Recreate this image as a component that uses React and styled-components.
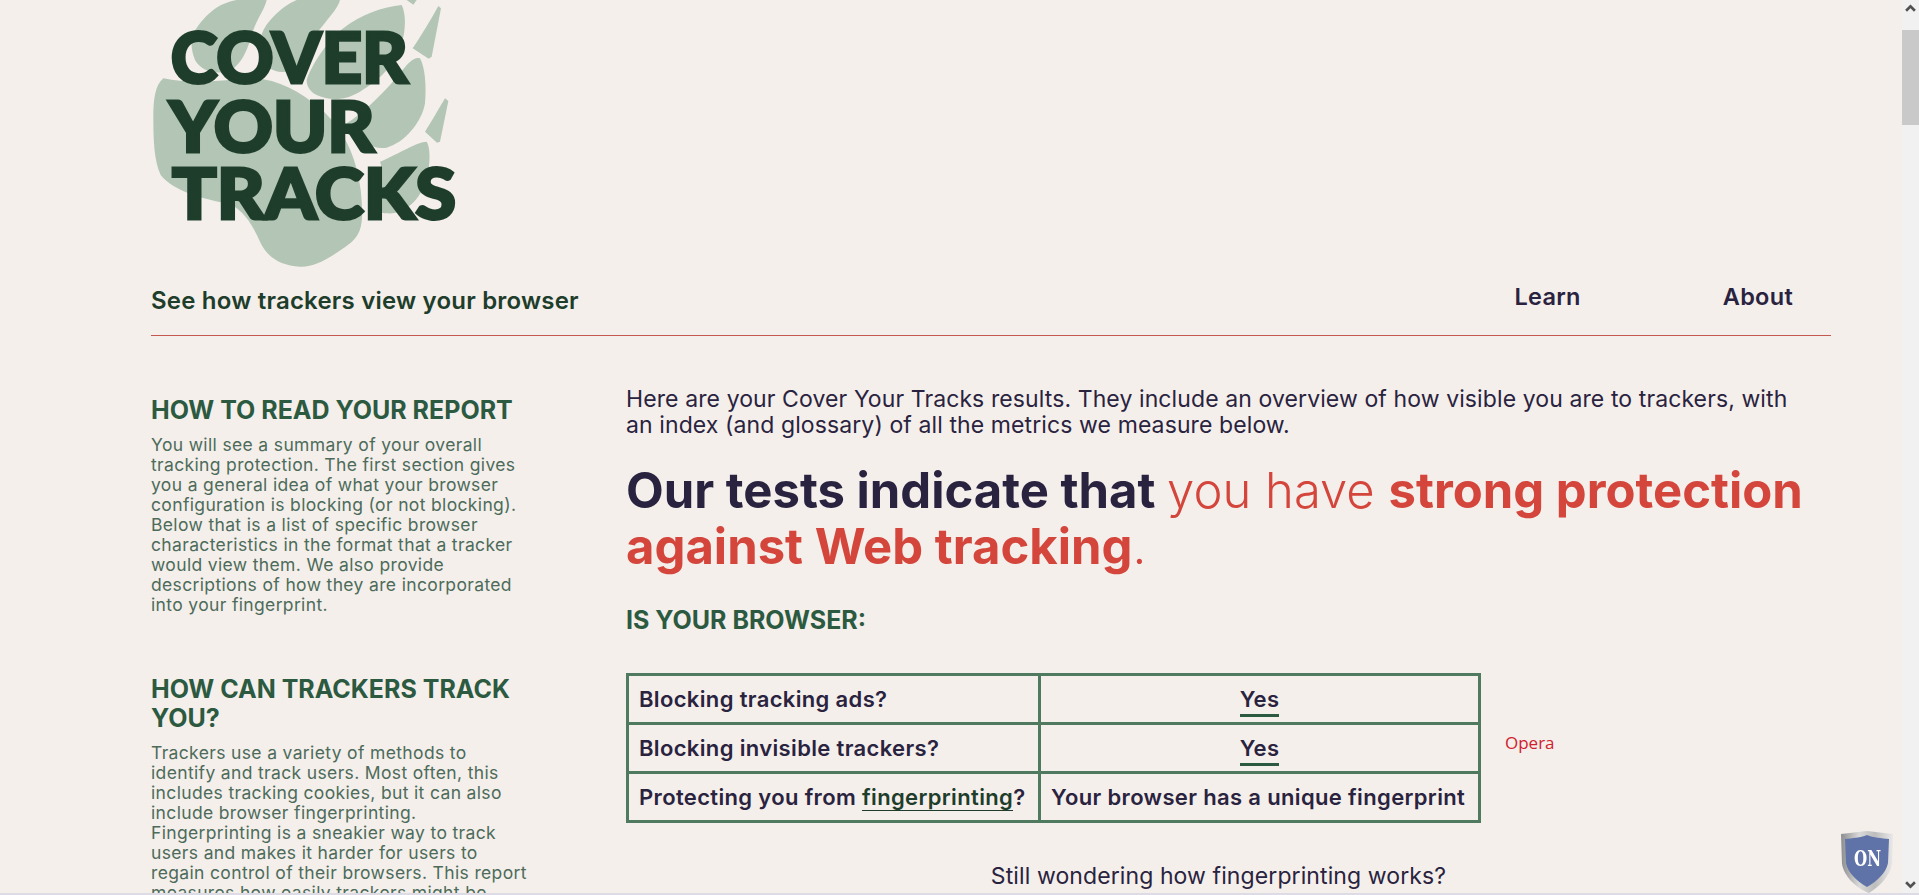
import React from "react";
import styled, { createGlobalStyle } from "styled-components";

const GlobalStyle = createGlobalStyle`
  html, body {
    margin: 0;
    padding: 0;
    height: 100%;
    overflow: hidden;
    background: #f4efeb;
  }
`;

const font = `Inter, "Noto Sans", "Liberation Sans", sans-serif`;

function Logo() {
  return (
    <LogoSvg viewBox="63 0 960 810">
      <g fill="#b3c5b5">
        <path d="M100 235C170 250 250 245 330 236C420 225 500 265 570 325C640 385 680 470 692 570C705 690 690 710 640 745C590 780 550 802 510 800C450 797 410 770 390 725C370 680 345 635 300 612C230 600 130 575 92 525C72 480 70 420 70 350C70 300 75 255 100 235Z" />
        <path d="M190 100C220 50 260 10 320 0L410 0C405 25 385 50 370 90C355 140 340 190 300 212C260 225 215 215 195 180C185 155 180 125 190 100Z" />
        <path d="M500 0L630 0C625 25 590 60 560 100C530 140 520 190 480 212C440 225 405 205 392 165C380 120 400 80 430 50C450 30 475 10 500 0Z" />
        <path d="M530 240C545 195 590 125 640 85C690 45 760 20 815 15C828 40 828 90 815 130C800 190 750 240 690 275C640 305 590 300 560 285C540 275 530 260 530 240Z" />
        <path d="M870 175C885 200 890 260 885 310C875 370 820 430 770 443C730 450 695 430 650 370C700 340 770 270 810 220C830 195 850 170 870 175Z" />
        <path d="M890 425C900 440 905 490 885 550C865 610 815 645 770 640C750 640 740 630 735 620C760 570 760 510 750 485C810 460 860 425 890 425Z" />
        <path d="M925 18L933 25L905 170L896 176L848 145C875 105 905 55 925 18Z" />
        <path d="M945 295L955 303L930 425L921 428L885 395C905 365 930 320 945 295Z" />
        <path d="M830 0L860 0L850 14Z" />
      </g>
      <LogoText x="122" y="250" textLength="712" lengthAdjust="spacingAndGlyphs">COVER</LogoText>
      <LogoText x="117" y="456" textLength="617" lengthAdjust="spacingAndGlyphs">YOUR</LogoText>
      <LogoText x="126" y="658" textLength="852" lengthAdjust="spacingAndGlyphs">TRACKS</LogoText>
    </LogoSvg>
  );
}

function Shield() {
  return (
    <ShieldBadge>
      <svg viewBox="0 0 54 64" width="54" height="64">
        <defs>
          <linearGradient id="steel" x1="0" x2="1" y1="0" y2="0">
            <stop offset="0" stopColor="#8d8d8f" />
            <stop offset="0.35" stopColor="#d9d9d9" />
            <stop offset="0.65" stopColor="#bdbdbd" />
            <stop offset="1" stopColor="#e8e8e8" />
          </linearGradient>
        </defs>
        <path d="M1 4C10 3 18 2 27 1C36 2 44 3 53 4L52 34C50 46 40 56 29 63C16 58 4 46 2 34Z" fill="url(#steel)" />
        <path d="M5 9C13 8 20 8 27 5C34 8 41 8 49 9L48 33C46 43 37 51 27 57C17 51 8 43 6 33Z" fill="#5f73a8" />
        <ShieldText x="14" y="36" textLength="27" lengthAdjust="spacingAndGlyphs">ON</ShieldText>
      </svg>
    </ShieldBadge>
  );
}

function ResultRow({ label, children, link, tail, center }) {
  return (
    <tr>
      <Cell $bold>
        {label}
        {link && <GlossaryLink>{link}</GlossaryLink>}
        {tail}
      </Cell>
      <Cell $center={center}>{children}</Cell>
    </tr>
  );
}

export default function App() {
  return (
    <Shell>
      <GlobalStyle />
      <Page>
        <Wrap>
          <Logo />
          <TopRow>
            <Tagline>See how trackers view your browser</Tagline>
            <Nav>
              <NavLink>Learn</NavLink>
              <NavLink>About</NavLink>
            </Nav>
          </TopRow>
          <Columns>
            <Sidebar>
              <SideTitle>HOW TO READ YOUR REPORT</SideTitle>
              <SideText>
                You will see a summary of your overall tracking protection. The first section gives you a general idea of what your browser configuration is blocking (or not blocking). Below that is a list of specific browser characteristics in the format that a tracker would view them. We also provide descriptions of how they are incorporated into your fingerprint.
              </SideText>
              <SideTitle>HOW CAN TRACKERS TRACK YOU?</SideTitle>
              <SideText>
                Trackers use a variety of methods to identify and track users. Most often, this includes tracking cookies, but it can also include browser fingerprinting. Fingerprinting is a sneakier way to track users and makes it harder for users to regain control of their browsers. This report measures how easily trackers might be able to fingerprint your browser.
              </SideText>
            </Sidebar>
            <Main>
              <Intro>
                Here are your Cover Your Tracks results. They include an overview of how visible you are to trackers, with an index (and glossary) of all the metrics we measure below.
              </Intro>
              <Verdict>
                Our tests indicate that <Thin>you have </Thin>
                <Strong>strong protection against Web tracking</Strong>
                <Thin>.</Thin>
              </Verdict>
              <SectionTitle>IS YOUR BROWSER:</SectionTitle>
              <TableRow>
                <Results>
                  <tbody>
                    <ResultRow label="Blocking tracking ads?" center>
                      <Answer>Yes</Answer>
                    </ResultRow>
                    <ResultRow label="Blocking invisible trackers?" center>
                      <Answer>Yes</Answer>
                    </ResultRow>
                    <ResultRow label="Protecting you from " link="fingerprinting" tail="?">
                      <Plain>Your browser has a unique fingerprint</Plain>
                    </ResultRow>
                  </tbody>
                </Results>
                <BrowserName>Opera</BrowserName>
              </TableRow>
              <Wondering>Still wondering how fingerprinting works?</Wondering>
            </Main>
          </Columns>
        </Wrap>
      </Page>
      <ScrollTrack>
        <ScrollArrow viewBox="0 0 10 8">
          <path d="M1 6L5 2L9 6" />
        </ScrollArrow>
        <ScrollThumb />
        <ScrollGap />
        <ScrollArrow viewBox="0 0 10 8">
          <path d="M1 2L5 6L9 2" />
        </ScrollArrow>
      </ScrollTrack>
      <Shield />
      <BottomStrip />
    </Shell>
  );
}

const Shell = styled.div`
  display: flex;
  height: 895px;
  overflow: hidden;
  font-family: ${font};
  background: #f4efeb;
`;
const Page = styled.div`
  flex: 1;
  min-width: 0;
  height: 895px;
  overflow: hidden;
`;
const Wrap = styled.div`
  width: 1680px;
  margin-left: 151px;
`;
const LogoSvg = styled.svg`
  display: block;
  width: 320px;
  height: 270px;
`;
const LogoText = styled.text`
  font-family: Lato, Inter, sans-serif;
  font-weight: 900;
  font-size: 212px;
  fill: #1e3d2b;
  stroke: #1e3d2b;
  stroke-width: 9px;
`;
const TopRow = styled.div`
  display: flex;
  align-items: flex-start;
  justify-content: space-between;
  height: 65px;
  border-bottom: 1px solid #c4574f;
`;
const Tagline = styled.div`
  font-size: 24px;
  font-weight: 600;
  letter-spacing: 0.2px;
  line-height: 30px;
  margin-top: 16px;
  color: #1e3d2b;
`;
const Nav = styled.div`
  display: flex;
  gap: 142px;
  margin-right: 38px;
  margin-top: 12px;
`;
const NavLink = styled.a`
  font-size: 23.5px;
  font-weight: 600;
  letter-spacing: 0.3px;
  line-height: 30px;
  color: #2a2340;
`;
const Columns = styled.div`
  display: flex;
  margin-top: 60px;
`;
const Sidebar = styled.div`
  width: 377px;
  margin-right: 98px;
`;
const SideTitle = styled.h3`
  margin: 0 0 10px;
  font-size: 25px;
  line-height: 29px;
  font-weight: 700;
  color: #2c5a41;
`;
const SideText = styled.p`
  margin: 0 0 60px;
  font-size: 17.5px;
  letter-spacing: 0.35px;
  line-height: 20px;
  color: #4d6b5a;
`;
const Main = styled.div`
  width: 1205px;
`;
const Intro = styled.p`
  margin: -10px 0 0;
  max-width: 1175px;
  font-size: 23px;
  letter-spacing: 0.1px;
  line-height: 26px;
  color: #2a2340;
`;
const Verdict = styled.h1`
  margin: 25px 0 0;
  font-size: 49px;
  line-height: 56px;
  font-weight: 700;
  color: #2a2340;
`;
const Thin = styled.span`
  font-weight: 300;
  color: #d4463c;
`;
const Strong = styled.span`
  color: #d4463c;
`;
const SectionTitle = styled.h3`
  margin: 31px 0 0;
  font-size: 25px;
  line-height: 29px;
  font-weight: 700;
  color: #2c5a41;
`;
const TableRow = styled.div`
  display: flex;
  align-items: center;
  margin-top: 38px;
`;
const Results = styled.table`
  width: 855px;
  border-collapse: collapse;
  border: 3px solid #4f7a5f;
`;
const Cell = styled.td`
  height: 46px;
  padding: 0 10px;
  border: 3px solid #4f7a5f;
  font-size: 22px;
  font-weight: 600;
  letter-spacing: 0.35px;
  color: #2a2340;
  white-space: nowrap;
  text-align: ${(p) => (p.$center ? "center" : "left")};
`;
const Answer = styled.span`
  display: inline-block;
  padding-top: 2px;
  line-height: 30px;
  border-bottom: 3px solid #2c5a41;
`;
const Plain = styled.span``;
const GlossaryLink = styled.a`
  color: #1e3d2b;
  border-bottom: 1px solid #1e3d2b;
`;
const BrowserName = styled.div`
  margin: 0 0 12px 24px;
  font-family: "Open Sans", sans-serif;
  font-size: 17px;
  color: #d0202e;
`;
const Wondering = styled.p`
  margin: 40px 0 0;
  padding-right: 20px;
  text-align: center;
  font-size: 23px;
  letter-spacing: 0.1px;
  line-height: 26px;
  color: #2a2340;
`;
const ScrollTrack = styled.div`
  display: flex;
  flex-direction: column;
  align-items: center;
  width: 17px;
  height: 893px;
  flex: none;
  background: #f1f1f1;
`;
const ScrollArrow = styled.svg`
  flex: none;
  width: 11px;
  height: 9px;
  margin: 4px 0;
  path {
    fill: none;
    stroke: #505050;
    stroke-width: 2.4;
  }
`;
const ScrollThumb = styled.div`
  width: 17px;
  height: 95px;
  margin-top: 13px;
  flex: none;
  background: #c9c9c9;
`;
const ScrollGap = styled.div`
  flex: 1;
`;
const ShieldBadge = styled.div`
  position: fixed;
  left: 1840px;
  top: 830px;
  line-height: 0;
  filter: blur(0.4px);
`;
const ShieldText = styled.text`
  font-family: "DejaVu Serif", serif;
  font-weight: 700;
  font-size: 22px;
  fill: #fff;
`;
const BottomStrip = styled.div`
  position: fixed;
  left: 0;
  right: 0;
  bottom: 0;
  height: 2px;
  background: #dddbe6;
`;
